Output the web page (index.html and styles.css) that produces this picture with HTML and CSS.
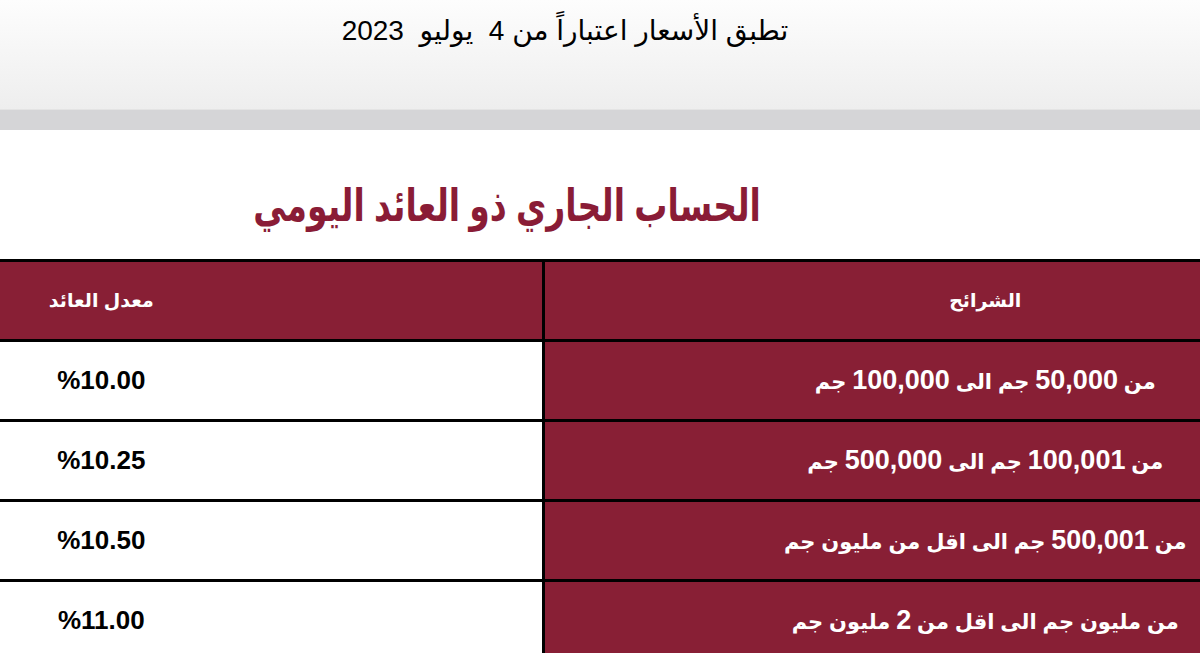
FILE: index.html
```html
<!DOCTYPE html>
<html lang="ar">
<head>
<meta charset="utf-8">
<title>الحساب الجاري ذو العائد اليومي</title>
<link rel="stylesheet" href="styles.css">
</head>
<body>
<header class="top">
  <p class="notice" dir="rtl">تطبق الأسعار اعتباراً من 4&nbsp; يوليو&nbsp; 2023</p>
</header>
<div class="band"></div>
<main class="content">
  <h1 class="heading" dir="rtl"><span class="heading-text">الحساب الجاري ذو العائد اليومي</span></h1>
  <table class="rates" dir="rtl">
    <thead>
      <tr>
        <th class="tier">الشرائح</th>
        <th class="rate">معدل العائد</th>
      </tr>
    </thead>
    <tbody>
      <tr>
        <td class="tier">من <span class="num">50,000</span> جم الى <span class="num">100,000</span> جم</td>
        <td class="rate"><span dir="ltr">%10.00</span></td>
      </tr>
      <tr>
        <td class="tier">من <span class="num">100,001</span> جم الى <span class="num">500,000</span> جم</td>
        <td class="rate"><span dir="ltr">%10.25</span></td>
      </tr>
      <tr>
        <td class="tier">من <span class="num">500,001</span> جم الى اقل من مليون جم</td>
        <td class="rate"><span dir="ltr">%10.50</span></td>
      </tr>
      <tr>
        <td class="tier">من مليون جم الى اقل من <span class="num">2</span> مليون جم</td>
        <td class="rate"><span dir="ltr">%11.00</span></td>
      </tr>
    </tbody>
  </table>
</main>
</body>
</html>
```

FILE: styles.css
```css
* { box-sizing: border-box; }
html, body { margin: 0; padding: 0; }
body {
  width: 1200px;
  height: 653px;
  overflow: hidden;
  background: #ffffff;
  font-family: "Liberation Sans", "DejaVu Sans", sans-serif;
  color: #000;
}
.top {
  height: 109px;
  background: linear-gradient(to bottom, #fdfdfd 0%, #eeeeee 100%);
  display: flex;
  justify-content: center;
  padding-right: 70px;
}
.notice {
  margin: 0;
  padding-top: 12px;
  font-size: 28px;
  line-height: 38px;
  white-space: nowrap;
}
.band {
  height: 21px;
  background: #d5d5d7;
  border-top: 1px solid #e4e4e4;
}
.content {
  display: flex;
  flex-direction: column;
}
.heading {
  margin: 0;
  height: 129px;
  padding: 52px 186px 0 0;
  text-align: center;
  font-size: 33px;
  line-height: 48px;
  font-weight: bold;
  color: #8a1c36;
}
.heading-text {
  display: inline-block;
  transform: scaleY(1.35);
}
.rates {
  width: 1200px;
  border-collapse: collapse;
  table-layout: fixed;
}
.rates th, .rates td {
  height: 80px;
  padding: 0;
  border-top: 3px solid #000;
  border-bottom: 3px solid #000;
  font-weight: bold;
  vertical-align: middle;
  white-space: nowrap;
}
.rates .tier {
  width: 657px;
  background: #881f35;
  color: #fff;
  text-align: center;
  padding-left: 226px;
  border-left: 3px solid #000;
  font-size: 21px;
}
.rates .num {
  font-size: 27px;
}
.rates th.tier, .rates th.rate {
  font-size: 19px;
}
.rates th.rate {
  background: #881f35;
  color: #fff;
}
.rates .rate {
  width: 543px;
  text-align: center;
  padding-right: 339px;
  font-size: 26px;
}
.rates td.rate {
  background: #fff;
  color: #000;
}
```
